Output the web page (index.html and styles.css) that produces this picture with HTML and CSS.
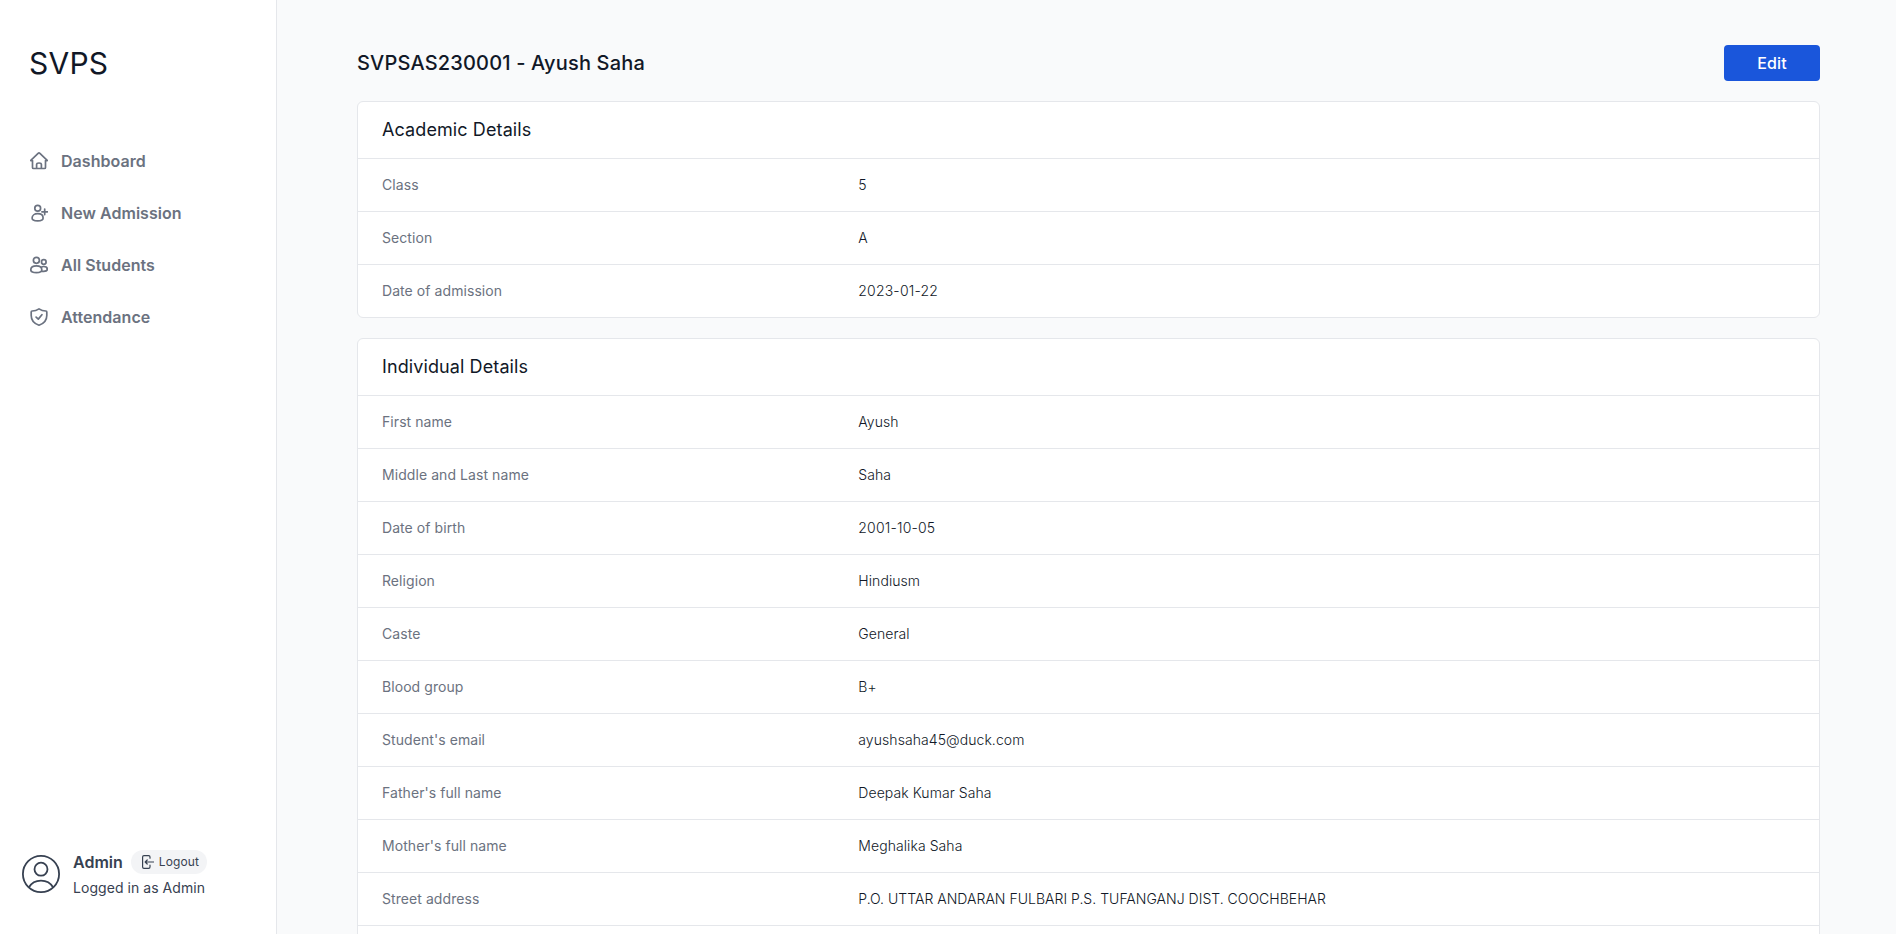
FILE: index.html
```html
<!DOCTYPE html>
<html lang="en">
<head>
<meta charset="utf-8">
<title>SVPS</title>
<link rel="stylesheet" href="styles.css">
</head>
<body>
<aside class="sidebar">
  <div class="logo">SVPS</div>
  <nav class="nav">
    <a class="nav-item"><svg class="icon" viewBox="0 0 18 18"><path d="M.8 8.6H2.5V15.4Q2.5 16.5 3.6 16.5H14.4Q15.5 16.5 15.5 15.4V8.6H17.2M.8 8.4 8.1 1.3Q9 .5 9.9 1.3L17.2 8.4M6.6 16.5V12.6Q6.6 11 9 11Q11.4 11 11.4 12.6V16.5"/></svg><span>Dashboard</span></a>
    <a class="nav-item"><svg class="icon" viewBox="0 0 18 18"><circle cx="7.7" cy="4.2" r="2.9"/><path d="M7.7 9.7C10.8 9.7 13.1 11.3 13.1 13.9C13.1 16 11.1 16.8 7.7 16.8S2.1 16 2.1 13.9C2.1 11.3 4.6 9.7 7.7 9.7ZM14.7 5V10.6M11.9 7.8H17.5"/></svg><span>New Admission</span></a>
    <a class="nav-item"><svg class="icon" viewBox="0 0 18 18"><circle cx="6.4" cy="4.3" r="3"/><circle cx="13.8" cy="6" r="2.3"/><path d="M6.4 9.8C9.5 9.8 11.8 11.3 11.8 13.8C11.8 15.9 9.7 16.7 6.4 16.7S.8 15.9.8 13.8C.8 11.3 3.3 9.8 6.4 9.8ZM11.1 11.2Q12.3 10.5 13.7 10.5C15.8 10.5 17.3 11.6 17.3 13.3C17.3 14.8 15.8 15.3 13.7 15.3H11.2"/></svg><span>All Students</span></a>
    <a class="nav-item"><svg class="icon" viewBox="0 0 18 18"><path d="M9 .9Q12.3 3.1 16 3Q16.8 3 16.8 4V7.5C16.8 12.6 13.7 15.6 9 17.2C4.3 15.6 1.2 12.6 1.2 7.5V4Q1.2 3 2 3Q5.7 3.1 9 .9ZM6.1 9.1 8.3 11.1 11.9 6.7"/></svg><span>Attendance</span></a>
  </nav>
  <div class="user">
    <svg class="avatar" viewBox="0 0 38 38"><circle cx="19" cy="19" r="18.1"/><circle cx="19" cy="14.2" r="6.5"/><path d="M7 32.3C9.5 27.8 14 25.6 19 25.6S28.5 27.8 31 32.3"/></svg>
    <div class="user-info">
      <div class="user-top"><span class="user-name">Admin</span><button class="logout"><svg class="logout-icon" viewBox="0 0 12 14"><path d="M8 3.2V2Q8 .6 6.6 .6H2Q.6 .6 .6 2V12Q.6 13.4 2 13.4H6.6Q8 13.4 8 12V10.2M11.5 7H3.2M5.2 5 3.2 7 5.2 9"/></svg><span>Logout</span></button></div>
      <div class="user-role">Logged in as Admin</div>
    </div>
  </div>
</aside>
<main class="main">
  <header class="head"><h1 class="title">SVPSAS230001 - Ayush Saha</h1><button class="edit">Edit</button></header>
  <section class="card">
    <h2 class="card-title">Academic Details</h2>
    <dl class="rows">
      <div class="row"><dt>Class</dt><dd>5</dd></div>
      <div class="row"><dt>Section</dt><dd>A</dd></div>
      <div class="row"><dt>Date of admission</dt><dd class="date">2023-01-22</dd></div>
    </dl>
  </section>
  <section class="card">
    <h2 class="card-title">Individual Details</h2>
    <dl class="rows">
      <div class="row"><dt>First name</dt><dd>Ayush</dd></div>
      <div class="row"><dt>Middle and Last name</dt><dd>Saha</dd></div>
      <div class="row"><dt>Date of birth</dt><dd class="date">2001-10-05</dd></div>
      <div class="row"><dt>Religion</dt><dd>Hindiusm</dd></div>
      <div class="row"><dt>Caste</dt><dd>General</dd></div>
      <div class="row"><dt>Blood group</dt><dd>B+</dd></div>
      <div class="row"><dt>Student's email</dt><dd>ayushsaha45@duck.com</dd></div>
      <div class="row"><dt>Father's full name</dt><dd>Deepak Kumar Saha</dd></div>
      <div class="row"><dt>Mother's full name</dt><dd>Meghalika Saha</dd></div>
      <div class="row"><dt>Street address</dt><dd class="address">P.O. UTTAR ANDARAN FULBARI P.S. TUFANGANJ DIST. COOCHBEHAR</dd></div>
      <div class="row"></div>
    </dl>
  </section>
</main>
</body>
</html>
```
FILE: styles.css
```css
* { box-sizing: border-box; margin: 0; padding: 0; }
body { display: flex; height: 100vh; overflow: hidden; background: #f9fafb; color: #111827; font-family: Inter, sans-serif; font-size: 14px; line-height: 20px; }
button { border: 0; font: inherit; }
.sidebar { display: flex; flex-direction: column; flex: none; width: 277px; background: #fff; border-right: 1px solid #e5e7eb; padding: 45px 20px 36px; }
.logo { padding-left: 9px; font-size: 30px; line-height: 36px; letter-spacing: 0.25px; }
.nav { display: flex; flex-direction: column; gap: 28px; padding: 68px 0 0 10px; }
.nav-item { display: flex; align-items: center; gap: 13px; height: 24px; color: #6b7280; font-size: 16px; font-weight: 600; line-height: 24px; letter-spacing: 0.04px; }
.icon { width: 18px; height: 18px; }
.icon, .avatar, .logout-icon { flex: none; fill: none; stroke: currentColor; stroke-width: 1.7; stroke-linecap: round; stroke-linejoin: round; }
.user { display: flex; align-items: center; gap: 13px; margin-top: auto; padding-left: 2px; color: #374151; }
.avatar { width: 38px; height: 38px; stroke-width: 1.8; }
.user-top { display: flex; align-items: center; gap: 8px; height: 24px; }
.user-name { font-size: 16px; font-weight: 600; }
.logout { display: flex; align-items: center; gap: 5px; height: 24px; padding: 0 8px 0 11px; border-radius: 12px; background: #f3f4f6; color: #374151; font-size: 12px; letter-spacing: 0.1px; }
.logout-icon { width: 12px; height: 14px; stroke-width: 1.2; }
.user-role { margin-top: 4px; letter-spacing: 0.05px; }
.main { flex: 1; padding: 45px 76px 0 80px; }
.head { display: flex; align-items: center; justify-content: space-between; height: 36px; margin-bottom: 20px; }
.title { font-size: 20px; font-weight: 500; line-height: 28px; letter-spacing: 0.17px; }
.edit { width: 96px; height: 36px; border-radius: 4px; background: #1a56db; color: #fff; font-size: 16px; font-weight: 500; letter-spacing: 0.1px; }
.card { margin-bottom: 20px; border: 1px solid #e5e7eb; border-radius: 6px; background: #fff; }
.card-title { padding: 14px 24px; font-size: 18px; font-weight: 400; line-height: 28px; letter-spacing: 0.1px; }
.row { display: grid; grid-template-columns: repeat(3, 1fr); gap: 16px; min-height: 53px; padding: 16px 24px; border-top: 1px solid #e5e7eb; letter-spacing: 0.07px; }
.row dt { color: #6b7280; }
.row dd { grid-column: span 2; font-weight: 300; }
.row .date { letter-spacing: 0.18px; }
.row .address { letter-spacing: 0.02px; }
```
